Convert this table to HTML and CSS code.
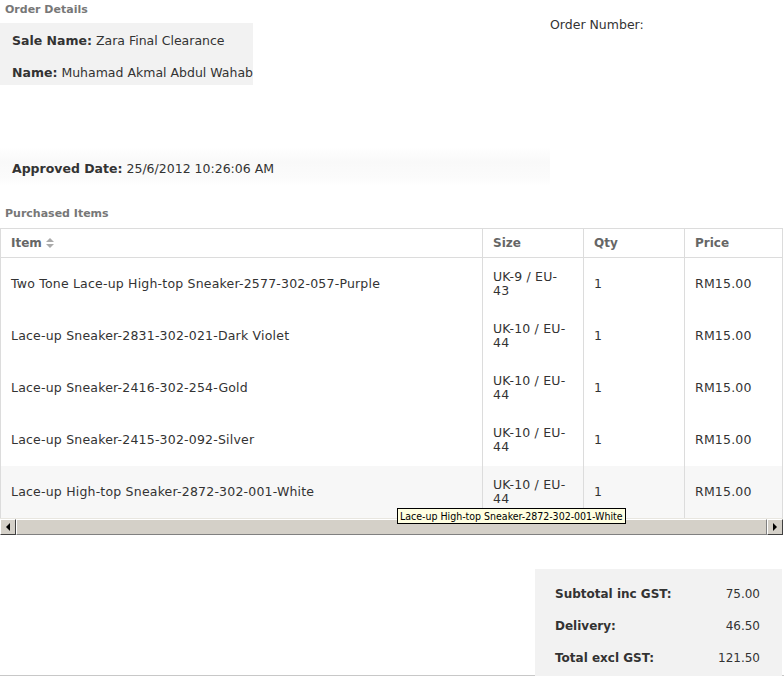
FILE: index.html
```html
<!DOCTYPE html>
<html lang="en">
<head>
    <meta charset="UTF-8">
    <title>Order Details</title>
    <link rel="stylesheet" href="styles.css">
</head>
<body>
<div id="page">
    <h4 class="section-title">Order Details</h4>
    <div class="order-top">
        <div class="info-box">
            <p><b>Sale Name:</b> Zara Final Clearance</p>
            <p><b>Name:</b> Muhamad Akmal Abdul Wahab</p>
        </div>
        <div class="order-number">Order Number:</div>
    </div>
    <div class="approved">
        <p><b>Approved Date:</b> 25/6/2012 10:26:06 AM</p>
    </div>

    <h4 class="section-title items-title">Purchased Items</h4>
    <div class="grid-wrap">
        <table class="grid">
            <thead>
            <tr>
                <th class="col-item">Item <span class="sort"><i class="up"></i><i class="down"></i></span></th>
                <th class="col-size">Size</th>
                <th class="col-qty">Qty</th>
                <th class="col-price">Price</th>
            </tr>
            </thead>
            <tbody>
            <tr>
                <td>Two Tone Lace-up High-top Sneaker-2577-302-057-Purple</td>
                <td class="size">UK-9 / EU-43</td>
                <td>1</td>
                <td>RM15.00</td>
            </tr>
            <tr>
                <td>Lace-up Sneaker-2831-302-021-Dark Violet</td>
                <td class="size">UK-10 / EU-44</td>
                <td>1</td>
                <td>RM15.00</td>
            </tr>
            <tr>
                <td>Lace-up Sneaker-2416-302-254-Gold</td>
                <td class="size">UK-10 / EU-44</td>
                <td>1</td>
                <td>RM15.00</td>
            </tr>
            <tr>
                <td>Lace-up Sneaker-2415-302-092-Silver</td>
                <td class="size">UK-10 / EU-44</td>
                <td>1</td>
                <td>RM15.00</td>
            </tr>
            <tr class="hover">
                <td>Lace-up High-top Sneaker-2872-302-001-White</td>
                <td class="size">UK-10 / EU-44</td>
                <td>1</td>
                <td>RM15.00</td>
            </tr>
            </tbody>
        </table>
        <div class="hscroll">
            <span class="btn btn-left"><i></i></span>
            <span class="track"></span>
            <span class="btn btn-right"><i></i></span>
        </div>
        <div class="tooltip">Lace-up High-top Sneaker-2872-302-001-White</div>
    </div>

    <div class="totals-wrap">
        <div class="totals">
            <div class="total-row"><b>Subtotal inc GST:</b><span>75.00</span></div>
            <div class="total-row"><b>Delivery:</b><span>46.50</span></div>
            <div class="total-row"><b>Total excl GST:</b><span>121.50</span></div>
        </div>
    </div>
</div>
</body>
</html>
```

FILE: styles.css
```css
*{
    padding:0;
    margin:0;
}
body{
    font-family: "DejaVu Sans", Verdana, sans-serif;
    color: #333;
    background: #fff;
}
#page{
    width: 784px;
    height: 676px;
    border-bottom: 1px solid #c8c8c8;
    box-sizing: border-box;
    position: relative;
}
.section-title{
    font-size: 11px;
    line-height: 14px;
    color: #777;
    font-weight: bold;
    padding: 3px 0 0 5px;
    height: 20px;
    box-sizing: border-box;
}
.order-top{
    display: flex;
}
.info-box{
    width: 253px;
    height: 62px;
    background-color: #f2f2f2;
    padding: 10px 0 0 12px;
    box-sizing: border-box;
    margin-top: 3px;
    white-space: nowrap;
}
.info-box p,
.approved p{
    font-size: 12.5px;
    line-height: 15px;
    height: 32px;
}
.order-number{
    font-size: 12.5px;
    line-height: 15px;
    margin: -3px 0 0 297px;
}
.approved{
    margin-top: 62px;
    width: 550px;
    height: 38px;
    padding: 14px 0 0 12px;
    box-sizing: border-box;
    background: linear-gradient(#fff, #f9f9f9 40%, #fbfbfb 80%, #fff);
}
.items-title{
    margin-top: 20px;
    padding-top: 2px;
    height: 23px;
}
.grid-wrap{
    position: relative;
    width: 783px;
}
.grid{
    border-collapse: collapse;
    width: 783px;
    font-size: 12.5px;
    letter-spacing: 0.2px;
    color: #333;
}
.grid th,
.grid td{
    border: 1px solid #dcdcdc;
    text-align: left;
    padding: 0 10px;
    vertical-align: middle;
}
.grid th{
    height: 28px;
    color: #666;
    font-size: 12px;
    letter-spacing: 0;
}
.grid td{
    height: 52px;
    line-height: 14px;
    border-top: none;
    border-bottom: none;
}
.grid .col-item{ width: 461px; }
.grid .col-size{ width: 76px; padding-right: 14px; }
.grid .col-qty{ width: 80px; }
.grid td.size{ padding-right: 14px; }
.grid .hover td{
    background-color: #f7f7f7;
}
.sort{
    display: inline-block;
    vertical-align: middle;
    width: 7px;
    height: 10px;
    position: relative;
    top: -1px;
}
.sort i{
    position: absolute;
    left: 0;
    width: 0;
    height: 0;
    border-left: 4px solid transparent;
    border-right: 4px solid transparent;
}
.sort .up{ top: 0; border-bottom: 4px solid #aaa; }
.sort .down{ top: 6px; border-top: 4px solid #aaa; }

.hscroll{
    display: flex;
    height: 16px;
    background: #d4d0c8;
    border-top: 1px solid #e8e6e0;
}
.hscroll .btn{
    width: 14px;
    height: 14px;
    background: #d4d0c8;
    border: 1px solid;
    border-color: #fff #404040 #404040 #fff;
    display: flex;
    align-items: center;
    justify-content: center;
}
.hscroll .track{
    flex: 1;
    background: #d4d0c8;
    border-top: 1px solid #fff;
    border-bottom: 1px solid #808080;
    border-left: 1px solid #fff;
    border-right: 1px solid #808080;
}
.btn i{
    width: 0;
    height: 0;
    border-top: 4px solid transparent;
    border-bottom: 4px solid transparent;
}
.btn-left i{ border-right: 4px solid #000; }
.btn-right i{ border-left: 4px solid #000; }

.tooltip{
    position: absolute;
    left: 397px;
    top: 280px;
    background: #ffffe1;
    border: 1px solid #000;
    font-family: "DejaVu Sans Condensed", sans-serif;
    font-size: 10.5px;
    line-height: 14px;
    padding: 0 2px;
    color: #000;
    white-space: nowrap;
}
.totals-wrap{
    display: flex;
    justify-content: flex-end;
    margin-top: 34px;
    padding-right: 2px;
}
.totals{
    background-color: #f2f2f2;
    width: 247px;
    padding: 9px 22px 2px 20px;
    box-sizing: border-box;
    font-size: 12px;
}
.total-row{
    display: flex;
    justify-content: space-between;
    align-items: center;
    height: 32px;
}
```
